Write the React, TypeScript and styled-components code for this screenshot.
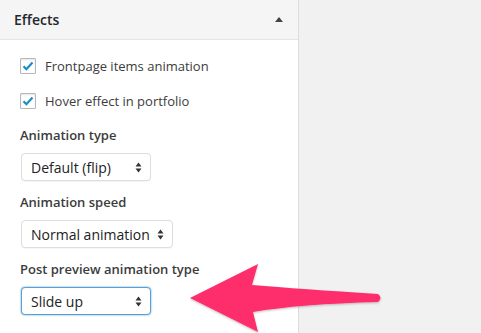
import styled, { createGlobalStyle } from 'styled-components'

const GlobalStyle = createGlobalStyle`
  html, body {
    margin: 0;
    padding: 0;
    background: #f1f1f1;
    font-family: "Open Sans", "Liberation Sans", sans-serif;
    color: #23282d;
  }
`

const Page = styled.div`
  position: relative;
  display: flex;
  width: 481px;
  height: 333px;
  overflow: hidden;
`

const Panel = styled.section`
  width: 298px;
  background: #fff;
  border-right: 1px solid #dcdcdc;
  display: flex;
  flex-direction: column;
`

const Header = styled.header`
  height: 40px;
  box-sizing: border-box;
  padding: 0 14px;
  display: flex;
  align-items: center;
  justify-content: space-between;
  background: #f5f5f5;
  border-bottom: 1px solid #e4e4e4;
`

const Title = styled.h3`
  margin: 0;
  font-size: 14px;
  font-weight: 600;
  color: #23282d;
`

const Toggle = styled.span`
  width: 0;
  height: 0;
  margin-right: 1px;
  border-left: 4px solid transparent;
  border-right: 4px solid transparent;
  border-bottom: 5px solid #444;
`

const Body = styled.div`
  padding: 16px 20px 0;
  display: flex;
  flex-direction: column;
`

const CheckRow = styled.label`
  display: flex;
  align-items: center;
  gap: 9px;
  height: 19px;
  margin-bottom: 16px;
  font-size: 13px;
  color: #3c3c3c;
`

const Box = styled.span`
  width: 16px;
  height: 16px;
  box-sizing: border-box;
  border: 1px solid #b4b9be;
  border-radius: 1px;
  background: #fff;
  box-shadow: inset 0 1px 2px rgba(0, 0, 0, 0.1);
  display: flex;
  align-items: center;
  justify-content: center;
`

const FieldLabel = styled.div`
  font-size: 13px;
  font-weight: 600;
  color: #3c3c3c;
  line-height: 18px;
`

const Select = styled.div<{ $width: number; $focus?: boolean }>`
  width: ${(p) => p.$width}px;
  height: 28px;
  box-sizing: border-box;
  margin: 9px 0 12px 1px;
  padding: 0 8px 0 9px;
  border: 1px solid ${(p) => (p.$focus ? '#5b9dd9' : '#ddd')};
  border-radius: 4px;
  box-shadow: ${(p) =>
    p.$focus ? '0 0 2px rgba(30, 140, 190, 0.8)' : '0 1px 1px rgba(0, 0, 0, 0.04)'};
  display: flex;
  align-items: center;
  justify-content: space-between;
  font-size: 14px;
  color: #222;
  background: #fff;
`

const ArrowLayer = styled.svg`
  position: absolute;
  left: 0;
  top: 0;
  pointer-events: none;
`

function Check() {
  return (
    <svg width="12" height="10" viewBox="0 0 12 10">
      <path d="M1.5 5.2 L4.4 8.2 L10.5 1.5" fill="none" stroke="#1e8cbe" strokeWidth="2.2" />
    </svg>
  )
}

function Updown() {
  return (
    <svg width="7" height="11" viewBox="0 0 7 11">
      <path d="M3.5 0.5 L6.5 4.5 L0.5 4.5 Z" fill="#333" />
      <path d="M3.5 10.5 L6.5 6.5 L0.5 6.5 Z" fill="#333" />
    </svg>
  )
}

export default function App() {
  return (
    <>
      <GlobalStyle />
      <Page>
        <Panel>
          <Header>
            <Title>Effects</Title>
            <Toggle />
          </Header>
          <Body>
            <CheckRow>
              <Box>
                <Check />
              </Box>
              Frontpage items animation
            </CheckRow>
            <CheckRow>
              <Box>
                <Check />
              </Box>
              Hover effect in portfolio
            </CheckRow>
            <FieldLabel>Animation type</FieldLabel>
            <Select $width={130}>
              Default (flip)
              <Updown />
            </Select>
            <FieldLabel>Animation speed</FieldLabel>
            <Select $width={152}>
              Normal animation
              <Updown />
            </Select>
            <FieldLabel>Post preview animation type</FieldLabel>
            <Select $width={130} $focus>
              Slide up
              <Updown />
            </Select>
          </Body>
        </Panel>
        <ArrowLayer width="481" height="333" viewBox="0 0 481 333">
          <defs>
            <filter id="sh" x="-10%" y="-10%" width="120%" height="130%">
              <feDropShadow dx="0" dy="1" stdDeviation="1.2" floodColor="#000" floodOpacity="0.25" />
            </filter>
          </defs>
          <path
            d="M190 298 L258 264 L252 285 Q300 289 378 294 Q383 298 378 302 Q300 304 253 312 L258 332 Z"
            fill="#fe2d6d"
            filter="url(#sh)"
          />
        </ArrowLayer>
      </Page>
    </>
  )
}
